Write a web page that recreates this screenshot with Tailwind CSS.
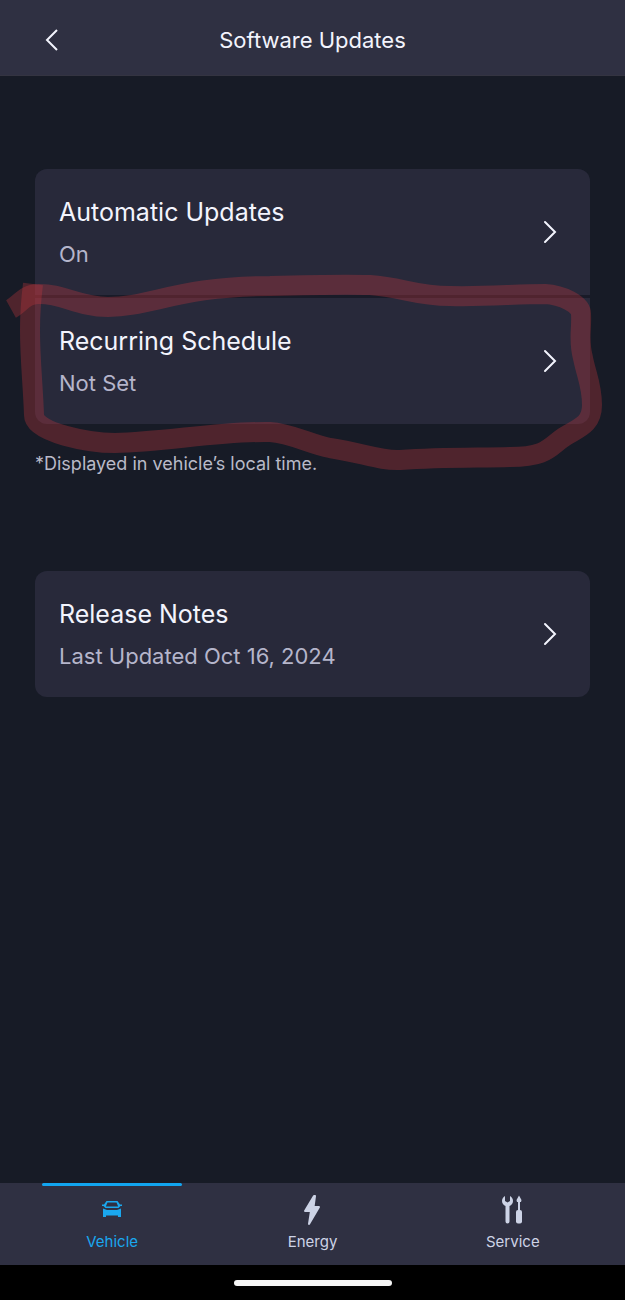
<!DOCTYPE html>
<html lang="en">
<head>
    <meta charset="UTF-8">
    <meta name="viewport" content="width=device-width, initial-scale=1.0">
    <title>Software Updates</title>
    <script src="https://cdn.jsdelivr.net/npm/@tailwindcss/browser@4"></script>
</head>
<body class="flex min-h-screen flex-col bg-[#171b26] font-['Inter',sans-serif] text-[#f3f4fd]">

    <!-- Header -->
    <header class="grid h-[76px] grid-cols-[1fr_auto_1fr] items-center border-b border-[#343441] bg-[#2f3042] px-8 pt-1">
        <button type="button" aria-label="Back" class="flex size-10 items-center justify-center">
            <svg class="h-6 w-4" viewBox="0 0 16 24" fill="none" stroke="currentColor" stroke-width="2"><path d="M13 2 3 12l10 10"/></svg>
        </button>
        <h1 class="text-[22px] leading-7">Software Updates</h1>
    </header>

    <main class="flex-1 px-[35px] pt-[93px]">

        <!-- Update settings -->
        <section class="relative">
            <div class="flex flex-col gap-[3px] overflow-hidden rounded-xl bg-[#191b28]">
                <button type="button" class="flex h-[126px] w-full items-center justify-between bg-[#28293a] pl-6 pr-8 text-left">
                    <span class="flex flex-col gap-3">
                        <span class="text-[25px] leading-8">Automatic Updates</span>
                        <span class="text-[22px] leading-7 text-[#b5b5cb]">On</span>
                    </span>
                    <svg class="h-6 w-4" viewBox="0 0 16 24" fill="none" stroke="currentColor" stroke-width="2" stroke-linecap="round"><path d="m3 2 10 10L3 22"/></svg>
                </button>
                <button type="button" class="flex h-[126px] w-full items-center justify-between bg-[#28293a] pl-6 pr-8 text-left">
                    <span class="flex flex-col gap-3">
                        <span class="text-[25px] leading-8">Recurring Schedule</span>
                        <span class="text-[22px] leading-7 text-[#b5b5cb]">Not Set</span>
                    </span>
                    <svg class="h-6 w-4" viewBox="0 0 16 24" fill="none" stroke="currentColor" stroke-width="2" stroke-linecap="round"><path d="m3 2 10 10L3 22"/></svg>
                </button>
            </div>
            <p class="mt-[26px] text-[18px] leading-7 text-[#b9bac8]">*Displayed in vehicle’s local time.</p>

            <!-- Marker drawn round the schedule row -->
            <svg class="pointer-events-none absolute -left-[35px] top-[101px] h-[210px] w-[calc(100%+70px)]" viewBox="0 270 625 210" preserveAspectRatio="none" fill="none" stroke="#c8393f" stroke-opacity=".32" stroke-width="20" aria-hidden="true">
                <path d="M11 309C20 304 25 294 38 294C62 293 78 307 108 307C150 307 180 286 270 286C305 285 345 284 370 285C402 287 415 296 450 296C485 297 515 294 545 294C562 295 581 304 581 314C582 330 578 340 583 358C586 374 592 385 592 405C592 425 578 428 564 437C550 446 548 457 510 457C480 458 445 457 400 460C380 461 363 453 330 448C310 444 290 433 270 432C220 431 165 442 115 443C90 443 34 433 34 415C33 385 30 360 30 330"/>
                <path d="M30 330C30 312 31 300 33 284"/>
            </svg>
        </section>

        <!-- Release notes -->
        <section class="mt-[93px]">
            <button type="button" class="flex h-[126px] w-full items-center justify-between rounded-xl bg-[#28293a] pl-6 pr-8 text-left">
                <span class="flex flex-col gap-3">
                    <span class="text-[25px] leading-8">Release Notes</span>
                    <span class="text-[22px] leading-7 text-[#b5b5cb]">Last Updated Oct 16, 2024</span>
                </span>
                <svg class="h-6 w-4" viewBox="0 0 16 24" fill="none" stroke="currentColor" stroke-width="2" stroke-linecap="round"><path d="m3 2 10 10L3 22"/></svg>
            </button>
        </section>
    </main>

    <!-- Bottom tabs -->
    <nav class="grid h-[82px] grid-cols-3 bg-[#2f3042] px-3 text-[15px] text-[#cdd3e6]">
        <a href="#vehicle" aria-current="page" class="flex flex-col items-center text-[#1aa7ee]">
            <span class="h-[3px] w-[140px] rounded-full bg-[#12a5f0]"></span>
            <svg class="mt-2 h-8 w-6" viewBox="0 0 24 32" fill="currentColor">
                <path fill-rule="evenodd" d="M6.500 7H17.500L20 10.500H22V12H20.500L18.500 14H5.500L3.500 12H2V10.500H4ZM7.500 8.500 5.800 12.500H18.200L16.500 8.500Z"/>
                <path d="M3 14.500 7 16H17L21 14.500V23H18V21.500H6V23H3Z"/>
            </svg>
            <span class="mt-1 leading-6">Vehicle</span>
        </a>
        <a href="#energy" class="flex flex-col items-center">
            <svg class="mt-[11px] h-8 w-6" viewBox="0 0 24 32" fill="currentColor" stroke="currentColor" stroke-width="2" stroke-linejoin="round">
                <path d="M14 2 5 17H11L9 30 19 13H13.500L15 2Z"/>
            </svg>
            <span class="mt-1 leading-6">Energy</span>
        </a>
        <a href="#service" class="flex flex-col items-center">
            <svg class="mt-[11px] h-8 w-6" viewBox="0 0 24 32" fill="currentColor">
                <path d="M4 2C2 3 1 5 1 7C1 9.500 2.500 11 4.500 12V27.500A2 2 0 0 0 8.500 27.500V12C10.500 11 12 9.500 12 7C12 5 11 3 9 2V7L6.500 8.500 4 7Z"/>
                <path d="M18 1.500 20.500 6 20 8H19V16H17V8H16L15.500 6Z"/>
                <rect x="15" y="16" width="6" height="13.500" rx="2"/>
            </svg>
            <span class="mt-1 leading-6">Service</span>
        </a>
    </nav>

    <!-- Gesture bar -->
    <footer class="flex h-[35px] items-center justify-center bg-black">
        <div class="h-[6px] w-[158px] rounded-full bg-[#f5f5f5]"></div>
    </footer>

</body>
</html>
